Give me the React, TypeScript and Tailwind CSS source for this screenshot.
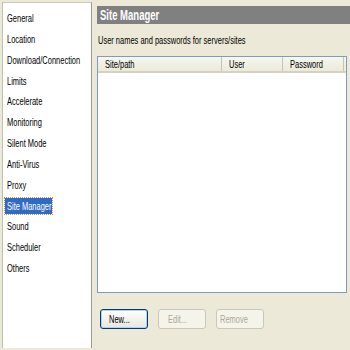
import React from "react";

const items = [
  "General",
  "Location",
  "Download/Connection",
  "Limits",
  "Accelerate",
  "Monitoring",
  "Silent Mode",
  "Anti-Virus",
  "Proxy",
  "Site Manager",
  "Sound",
  "Scheduler",
  "Others",
];

function T({ children, className = "" }: { children: React.ReactNode; className?: string }) {
  return (
    <span className={"inline-block whitespace-nowrap origin-left scale-x-[0.68] " + className}>
      {children}
    </span>
  );
}

export default function App() {
  return (
    <div
      className="w-[350px] h-[350px] bg-[#ECE9D8] flex overflow-hidden text-[11px] text-black"
      style={{ fontFamily: '"Liberation Sans", Arial, sans-serif' }}
    >
      <div className="ml-[2px] mt-[2px] w-[90px] h-[346px] bg-white border-l border-l-[#B8C4B0] border-r border-r-[#9C9A90] border-t border-t-[#C8C8C0] flex flex-col pt-[5px] shrink-0">
        {items.map((it) => {
          const sel = it === "Site Manager";
          return (
            <div key={it} className="h-[20.83px] flex items-center pl-[2px]">
              {sel ? (
                <div className="h-[16px] w-[47px] bg-[#316AC5] text-white flex items-center px-[2px] outline outline-1 outline-dotted outline-[#C0A040]">
                  <T>{it}</T>
                </div>
              ) : (
                <div className="h-[16px] flex items-center px-[2px]">
                  <T>{it}</T>
                </div>
              )}
            </div>
          );
        })}
      </div>

      <div className="flex-1 flex flex-col pl-[5px] pt-[6px]">
        <div className="h-[18px] bg-[#808080] text-white flex items-center pl-[3px]">
          <T className="text-[14px] font-bold">Site Manager</T>
        </div>
        <div className="h-[32px] flex items-center pl-[1px]">
          <T>User names and passwords for servers/sites</T>
        </div>
        <div className="w-[250px] h-[237px] bg-white border border-[#7F9DB9] flex flex-col">
          <div className="h-[16px] flex bg-gradient-to-b from-[#F7F6F0] to-[#EBEADB] border-b-[2px] border-b-[#D6D2C2]">
            <div className="w-[124px] flex items-center pl-[7px] border-r border-r-[#C7C5B2]">
              <T>Site/path</T>
            </div>
            <div className="w-[61px] flex items-center pl-[7px] border-r border-r-[#C7C5B2]">
              <T>User</T>
            </div>
            <div className="flex-1 flex items-center pl-[7px] border-r border-r-[#C7C5B2] mr-[2px]">
              <T>Password</T>
            </div>
          </div>
        </div>
        <div className="flex gap-[10px] mt-[16px] pl-[3px]">
          <div className="w-[48px] h-[20px] rounded-[3px] border border-[#003C74] bg-gradient-to-b from-white to-[#E8E7E0] flex items-center justify-center shadow-[inset_0_0_0_1px_#B8D0F0]">
            <T className="origin-center">New...</T>
          </div>
          <div className="w-[48px] h-[20px] rounded-[3px] border border-[#C9C7BA] bg-[#F5F4EA] flex items-center justify-center text-[#ACA899]">
            <T className="origin-center">Edit...</T>
          </div>
          <div className="w-[48px] h-[20px] rounded-[3px] border border-[#C9C7BA] bg-[#F5F4EA] flex items-center justify-center text-[#ACA899]">
            <T className="origin-center">Remove</T>
          </div>
        </div>
      </div>
    </div>
  );
}
